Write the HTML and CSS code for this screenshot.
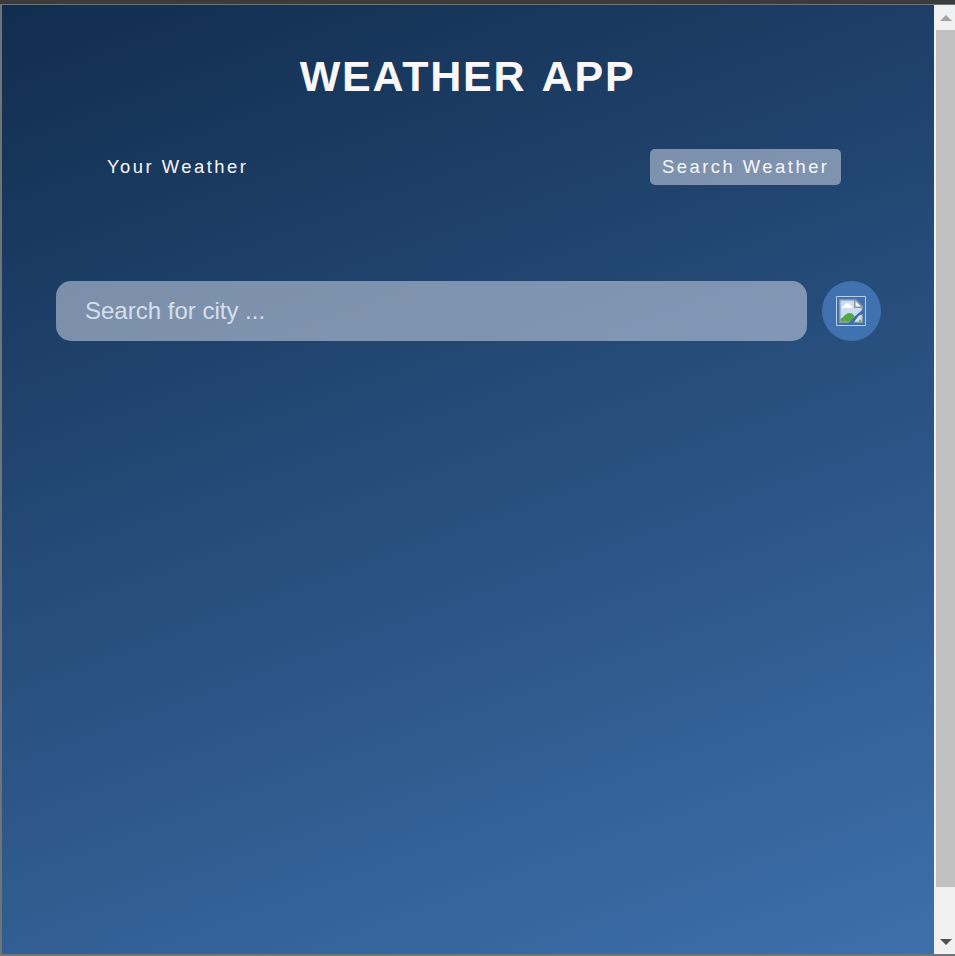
FILE: index.html
```html
<!DOCTYPE html>
<html lang="en">
<head>
<meta charset="utf-8">
<title>Weather App</title>
<link rel="stylesheet" href="styles.css">
</head>
<body>
<div class="window">
  <main class="wrapper">
    <h1 class="title">WEATHER APP</h1>
    <nav class="tabs">
      <span class="tab">Your Weather</span>
      <span class="tab current">Search Weather</span>
    </nav>
    <form class="search">
      <input class="city" type="text" placeholder="Search for city ...">
      <button class="go" type="button" aria-label="Search">
        <svg width="30" height="30" viewBox="0 0 30 30">
          <path d="M.5.5h29v29H.5z" fill="none" stroke="#b9cde6"/>
          <path d="M3 3h17l7 7v17H3z" fill="#8493a6"/>
          <path d="M4.500 4.500H18v7.500h7.500v13.500h-21z" fill="#cbdbf3"/>
          <path d="M19.500 5v5.500H25z" fill="#f4f7fb"/>
          <path d="M6 12c0-1.500 1-2.500 2.500-2.500.5-1.600 1.700-2.500 3.200-2.500s2.700 1 3 2.500c1.300 0 2 1 2 2.500z" fill="#fff"/>
          <path d="M4.500 25.500V23c3-1.500 5-6 9-6 2.500 0 4 1.500 5 3l-4 5.500z" fill="#54a944"/>
          <path d="M28 12.500v4.800L22.500 20 17 27.500h-5l6-6.500z" fill="#416fa9"/>
          <path d="M19 25.500l4-5 2.500-1.500v6.500z" fill="#d6e3f2"/>
          <path d="M22.500 25.500l1.500-2.500 1.500 2.500z" fill="#54a944"/>
        </svg>
      </button>
    </form>
  </main>
  <div class="scrollbar">
    <svg class="arrow" width="12" height="6" viewBox="0 0 12 6"><path d="M0 6 6 0l6 6z" fill="#a3a3a3"/></svg>
    <div class="thumb"></div>
    <svg class="arrow down" width="12" height="6" viewBox="0 0 12 6"><path d="M0 0h12L6 6z" fill="#505050"/></svg>
  </div>
</div>
</body>
</html>
```
FILE: styles.css
```css
* { box-sizing: border-box; margin: 0; padding: 0; }
body {
  height: 956px;
  overflow: hidden;
  background: #3b3b3b;
  font-family: "Liberation Sans", Arial, sans-serif;
}
.window {
  display: flex;
  height: 952px;
  margin-top: 4px;
  border: solid #6f747b;
  border-width: 1px 0 2px 2px;
}
.wrapper {
  width: 932px;
  background: linear-gradient(160deg, #112d4e 0%, #3f72af 100%) 0 0 / 100% 996px;
  color: #f9f7f7;
}
.title {
  margin-top: 46px;
  padding-right: 1px;
  font-size: 43px;
  line-height: 50px;
  letter-spacing: 1.8px;
  word-spacing: 3px;
  text-align: center;
}
.tabs {
  display: flex;
  justify-content: space-between;
  width: 746px;
  margin: 48px auto 0;
}
.tab {
  height: 36px;
  padding: 0 10.500px 0 12px;
  border-radius: 5px;
  font-size: 18.4px;
  line-height: 36px;
  letter-spacing: 2.5px;
  white-space: nowrap;
}
.current { background: rgba(219, 226, 239, .5); }
.search {
  display: flex;
  gap: 15px;
  margin: 96px 53px 0 54px;
}
.city {
  flex: 1;
  height: 60px;
  padding: 0 29px;
  border: 0;
  border-radius: 15px;
  background: rgba(219, 226, 239, .5);
  font: 24px "Liberation Sans", Arial, sans-serif;
}
.city::placeholder { color: rgba(237, 245, 255, .8); opacity: 1; }
.go {
  display: grid;
  place-items: center;
  width: 59px;
  height: 60px;
  padding-right: 1px;
  border: 0;
  border-radius: 50%;
  background: #3f72af;
}
.current { padding-right: 11.500px; }
.scrollbar {
  display: flex;
  flex-direction: column;
  align-items: center;
  flex: 1;
  padding: 10px 0 9px 2px;
  background: #f1f1f1;
}
.thumb {
  align-self: stretch;
  height: 857px;
  margin-top: 9px;
  background: #c1c1c1;
}
.arrow { display: block; margin-left: 1px; }
.down { margin-top: auto; }
```
